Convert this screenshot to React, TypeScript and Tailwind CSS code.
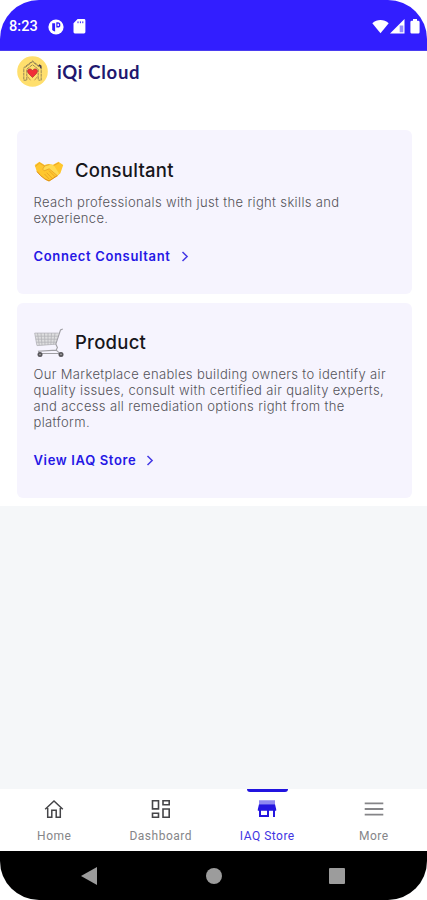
import type { ReactNode } from "react";

function StatusBar() {
  return (
    <header className="flex h-[51px] shrink-0 items-center justify-between border-b border-[#4a3cf0] bg-[#321eff] pt-[3px] pr-[7px] pl-[9px] text-white">
      <div className="flex items-center">
        <span className="w-[39px] pt-[2px] font-[Roboto,sans-serif] text-[14.5px] leading-none font-medium tracking-[0.1px]">8:23</span>
        <svg className="h-4 w-4" viewBox="0 0 16 16">
          <circle cx="8" cy="8" r="7.6" fill="white" />
          <path d="M4.2 4.3h2.9v8.2A4.8 4.8 0 0 1 4.2 11z" fill="#321eff" />
          <path d="M8.3 3.3h1.5A2.6 2.6 0 0 1 9.8 8.5H8.3z" fill="#321eff" />
          <rect x="9.5" y="4.8" width="1.4" height="2.2" fill="white" />
        </svg>
        <svg className="ml-[9px] h-[15px] w-[13px]" viewBox="0 0 13 15">
          <path d="M4.6 0H11a1.4 1.4 0 0 1 1.4 1.4v11.7a1.4 1.4 0 0 1-1.4 1.4H1.9a1.4 1.4 0 0 1-1.4-1.4V4.3z" fill="white" />
          <path d="M5 2.4v1.8M7.4 2.4v1.8M9.8 2.4v1.8" stroke="#321eff" strokeWidth="1" />
        </svg>
      </div>
      <div className="flex items-center">
        <svg className="h-[15px] w-[17px]" viewBox="0 0 17 15">
          <path d="M.3 4.2C5-0.2 12-0.2 16.7 4.2L8.5 14.3z" fill="white" />
        </svg>
        <svg className="ml-px h-[15px] w-[15px]" viewBox="0 0 15 15">
          <path d="M0 14.5L14.5 0v14.5z" fill="white" />
          <path d="M9.7 6.5h3.6v6.8H9.7z" fill="#9389ff" />
        </svg>
        <svg className="ml-[5px] h-[15px] w-[10px]" viewBox="0 0 10 15">
          <path d="M3 0h4v1.7h1.2A1.4 1.4 0 0 1 9.6 3v10.3a1.3 1.3 0 0 1-1.4 1.2H1.8a1.3 1.3 0 0 1-1.4-1.2V3a1.4 1.4 0 0 1 1.4-1.3H3z" fill="white" />
        </svg>
      </div>
    </header>
  );
}

function BrandLogo() {
  return (
    <svg className="h-[31px] w-[31px]" viewBox="0 0 31 31">
      <circle cx="15.5" cy="15.5" r="15.3" fill="#ffdf6d" />
      <path d="M9.5 24.2H6.8V11.7L15.5 5l8.7 6.7v12.5h-2.7M9.8 24V13.2l5.7-4.5 5.7 4.5V24M8.2 11.4l7.3-5.6 7.3 5.6" fill="none" stroke="#8a7a55" strokeWidth=".9" strokeDasharray="3 .6" />
      <path d="M22 8.8l1.8 1.4v2" fill="none" stroke="#463c49" strokeWidth="1.5" />
      <path d="M15.5 21.5l-4-4c-3-4.1 2-6.3 4-3 2-3.3 7-1.1 4 3z" fill="#f12e37" stroke="#9d2630" strokeWidth=".6" />
      <path d="M10.5 20.5l3 3.8M20.5 20.5l-3 3.8" stroke="#ad844c" strokeWidth=".8" />
    </svg>
  );
}

function Handshake() {
  return (
    <svg className="mt-[3px] h-[22px] w-[30px]" viewBox="0 0 30 22">
      <path d="M.7 4L5.4.8l5.2 3.1 4-.9 4.4.8L24.5.7l4.7 3.2-2.8 8.4-3.4 2.9-4.8 3.4-3.2 2-2.3-1.1-2.2-1.5-4-3.4L3 11.2z" fill="#ffc72e" />
      <path d="M10.5 4.1l5-.9 4.2 1 5.3 8-1.7 2.5-8.2-6.9-4.7 2-1.8-1.6z" fill="#ffda52" />
      <path d="M1.8 5.2L5.4 2l5.1 3-1.8 3.1 1.5 1.7 5-2 8.3 7M10.5 5l4.6-1.3M20 4.3l4.5-2.2M15.4 10l5.5 5.6M13 12l5 5.2M10.8 13.3l4.3 4.7" fill="none" stroke="#e6a024" strokeWidth=".8" strokeLinecap="round" />
      <path d="M3 10.5l3.7 4.2 4.2 3.3 4.2 1.9 8-5.1" fill="none" stroke="#d88717" strokeWidth=".9" />
    </svg>
  );
}

function ShoppingCart() {
  return (
    <svg className="mt-px h-[30px] w-[30px]" viewBox="0 0 30 30">
      <path d="M.7 5.2h24l-3 11L3 17.7z" fill="#dededf" />
      <path d="M.7 5.1h24M1.2 8.2H24M1.7 11.2H23M2.2 14.2h20M3 17.6l18.6-1.4M3.5 5l1.8 12.2M7 5l1 12.2M10.5 5l.5 12M14 5v12M17.5 5l-.7 11.6M21 5l-1.4 11.4M.7 5l2.2 12.5" fill="none" stroke="#b3b3b7" strokeWidth=".8" />
      <path d="M28.8 1.1L26.5 2l-4.7 14.1 1.6 3.5-1.2 2.5 4.2 3.7M22.3 22.1L4.5 23.3l1 2.2h20.7" fill="none" stroke="#a09fa4" strokeWidth="1.1" />
      <circle cx="6" cy="26.6" r="2.5" fill="#58565b" />
      <circle cx="27" cy="26.4" r="2.5" fill="#58565b" />
      <circle cx="6" cy="26.6" r=".8" fill="#aaa" />
      <circle cx="27" cy="26.4" r=".8" fill="#aaa" />
    </svg>
  );
}

function FeatureCard({ icon, title, children, action, className }: { icon: ReactNode; title: string; children: ReactNode; action: string; className: string }) {
  return (
    <section className={`rounded-md bg-[#f6f4fe] px-[16.5px] ${className}`}>
      <div className="flex h-8 items-center gap-[11.5px]">
        {icon}
        <h2 className="text-[18.5px] leading-6 font-medium tracking-[0.25px] text-[#17161b]">{title}</h2>
      </div>
      <p className="text-[13px] leading-[16.3px] font-light tracking-[0.35px] whitespace-nowrap text-[#545359]">{children}</p>
      <button className="mt-5 flex h-5 items-center gap-[10px] text-[13px] font-semibold tracking-[0.65px] text-[#2517e5]">
        {action}
        <svg className="h-[11px] w-[8px]" viewBox="0 0 8 11" fill="none" stroke="#4438e5" strokeWidth="1.5"><path d="M1.5 1l4.6 4.5L1.5 10" /></svg>
      </button>
    </section>
  );
}

function NavItem({ label, active = false, children }: { label: string; active?: boolean; children: ReactNode }) {
  return (
    <button className={`flex flex-1 flex-col items-center ${active ? "text-[#3f35e2]" : "text-[#858588]"}`}>
      <span className={`h-[3px] w-[41px] rounded-b-sm ${active ? "bg-[#2114df]" : "bg-transparent"}`} />
      <svg className="mt-[7px] h-5 w-5" viewBox="0 0 20 20" fill="none">{children}</svg>
      <span className="mt-[9px] font-[Roboto,sans-serif] text-[12px] leading-4 tracking-[0.5px]">{label}</span>
    </button>
  );
}

export default function App() {
  return (
    <div className="bg-white font-[Inter,sans-serif]">
      <div className="flex h-[900px] w-[427px] flex-col overflow-hidden rounded-[39px] bg-[#f5f7f9]">
        <StatusBar />
        <main className="h-[455px] shrink-0 bg-white pt-[5px] pr-[15px] pl-[17px]">
          <div className="flex h-[31px] items-center gap-[9px]">
            <BrandLogo />
            <h1 className="font-[Lato,sans-serif] text-[18.5px] leading-6 font-bold tracking-[0.7px] text-[#21176e]">iQi Cloud</h1>
          </div>
          <div className="mt-[43px] flex flex-col gap-[9px]">
            <FeatureCard icon={<Handshake />} title="Consultant" action="Connect Consultant" className="h-[164px] pt-6">
              <span className="block pt-2">Reach professionals with just the right skills and<br />experience.</span>
            </FeatureCard>
            <FeatureCard icon={<ShoppingCart />} title="Product" action="View IAQ Store" className="h-[195px] pt-[23px]">
              <span className="block pt-[7.5px]">Our Marketplace enables building owners to identify air<br />quality issues, consult with certified air quality experts,<br />and access all remediation options right from the<br />platform.</span>
            </FeatureCard>
          </div>
        </main>
        <div className="flex-1" />
        <nav className="flex h-[62px] shrink-0 bg-white pl-px">
          <NavItem label="Home">
            <path d="M1.2 10.3L10 2l8.8 8.3M3.7 9v9.2h4.1v-7h4.4v7h4.1V9" stroke="#454548" strokeWidth="1.5" />
          </NavItem>
          <NavItem label="Dashboard">
            <path d="M1.5 1.7h6v8.2h-6zM12 1.7h6.2v4H12zM1.5 14.2h6v4h-6zM12 10h6.2v8.2H12z" stroke="#454548" strokeWidth="1.6" />
          </NavItem>
          <NavItem label="IAQ Store" active>
            <path d="M2 1.3h16v4H2z" fill="#8f88f1" />
            <path d="M2 5.3h16l1.2 5v1.5H18V18h-2v-6.2h-4V18H2v-6.2H.8v-1.5zM4 11.8V16h6v-4.2z" fill="#2516df" fillRule="evenodd" />
          </NavItem>
          <NavItem label="More">
            <path d="M.7 4.3h18.6M.7 10h18.6M.7 15.6h18.6" stroke="#858588" strokeWidth="1.8" />
          </NavItem>
        </nav>
        <footer className="flex h-[49px] shrink-0 items-center justify-between bg-black pr-[82px] pl-[81px]">
          <svg className="h-[18px] w-4" viewBox="0 0 16 18"><path d="M0 9L16 0v18z" fill="#9c9c9c" /></svg>
          <span className="ml-px h-4 w-4 rounded-full bg-[#9c9c9c]" />
          <span className="h-4 w-4 rounded-[1px] bg-[#9c9c9c]" />
        </footer>
      </div>
    </div>
  );
}
